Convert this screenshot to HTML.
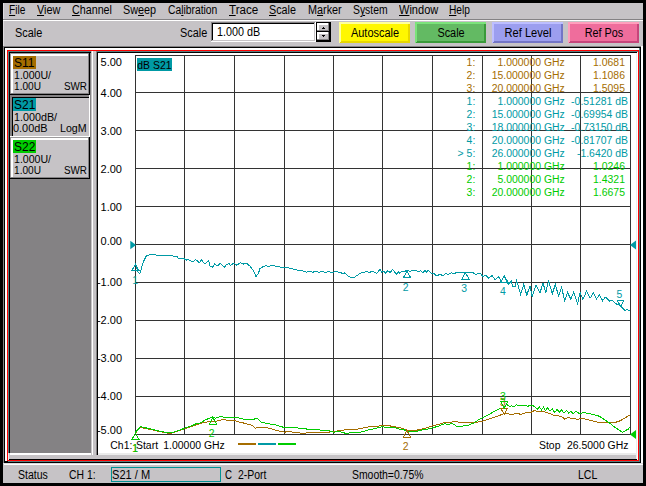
<!DOCTYPE html>
<html><head><meta charset="utf-8"><title>Network Analyzer</title>
<style>
html,body{margin:0;padding:0;background:#000;}
body{width:646px;height:486px;position:relative;overflow:hidden;font-family:"Liberation Sans",sans-serif;}
div,span,svg{position:absolute;}
.grp{left:0;top:0;width:0;height:0;}
span{white-space:nowrap;}
span.t{position:static;}
u{text-decoration:underline;text-underline-offset:1px;text-decoration-thickness:1px;}
svg text{font-family:"Liberation Sans",sans-serif;}
</style></head><body>
<div id="window-frame" class="grp">
<div style="left:3px;top:3px;width:640px;height:480px;background:#c6c3c6;"></div>
<div style="left:3px;top:3px;width:1px;height:43px;background:#dedbde;"></div>
<div style="left:3px;top:19px;width:640px;height:1px;background:#848284;"></div>
<div style="left:3px;top:20px;width:640px;height:1px;background:#fff;"></div>
<div style="left:3px;top:46px;width:639px;height:1px;background:#848284;"></div>
<div style="left:3px;top:46px;width:1px;height:418px;background:#848284;"></div>
<div style="left:4px;top:47px;width:637px;height:416px;background:#000;"></div>
<div style="left:641px;top:46px;width:2px;height:419px;background:#fff;"></div>
<div style="left:3px;top:463px;width:640px;height:1px;background:#dedbde;"></div>
<div style="left:4px;top:464px;width:639px;height:1px;background:#fff;"></div>
<div style="left:5px;top:48px;width:635px;height:414px;background:#fff;"></div>
<div style="left:639px;top:48px;width:1px;height:414px;background:#5a7d7f;"></div>
<div style="left:5px;top:461px;width:635px;height:1px;background:#5a7d7f;"></div>
<div style="left:5px;top:461px;width:3px;height:1px;background:#000;"></div>
<div style="left:7px;top:50px;width:632px;height:411px;background:#ff0000;"></div>
<div style="left:8px;top:51px;width:630px;height:409px;background:#5a7d7f;"></div>
<div style="left:9px;top:52px;width:629px;height:408px;background:#000;"></div>
<div style="left:637px;top:52px;width:1px;height:408px;background:#fff;"></div>
<div style="left:10px;top:53px;width:627px;height:406px;background:#c6c3c6;"></div>
<div style="left:636px;top:53px;width:1px;height:406px;background:#e7efef;"></div>
<div style="left:9px;top:459px;width:628px;height:1px;background:#000;"></div>
<div style="left:8px;top:453px;width:1px;height:7px;background:#e7efef;"></div>
</div>
<div id="trace-panel" class="grp">
<div style="left:10px;top:53px;width:81px;height:400px;background:#848284;"></div>
<div style="left:10px;top:453px;width:82px;height:2px;background:#fff;"></div>
<div style="left:9px;top:453px;width:1px;height:6px;background:#c6c3c6;"></div>
<div style="left:91px;top:51px;width:1px;height:404px;background:#c6c3c6;"></div>
<div style="left:92px;top:51px;width:1px;height:404px;background:#fff;"></div>
<div style="left:93px;top:51px;width:3px;height:404px;background:#c6c3c6;"></div>
<div style="left:96px;top:51px;width:1px;height:404px;background:#848284;"></div>
<div style="left:97px;top:52px;width:1px;height:403px;background:#000;"></div>
<div style="left:98px;top:53px;width:538px;height:400px;background:#fff;"></div>
<div style="left:98px;top:453px;width:538px;height:2px;background:#ebebeb;"></div>
</div>
<div id="trace-buttons" class="grp">
<div style="left:10px;top:53px;width:80px;height:42px;background:#000;"></div>
<div style="left:10px;top:53px;width:79px;height:41px;background:#848284;"></div>
<div style="left:10px;top:53px;width:78px;height:40px;background:#9c9a9c;"></div>
<div style="left:11px;top:54px;width:77px;height:39px;background:#fff;"></div>
<div style="left:13px;top:56px;width:75px;height:37px;background:#c6c3c6;"></div>
<div style="left:10px;top:95px;width:80px;height:42px;background:#fff;"></div>
<div style="left:10px;top:95px;width:79px;height:41px;background:#848284;"></div>
<div style="left:12px;top:97px;width:77px;height:39px;background:#000;"></div>
<div style="left:13px;top:98px;width:76px;height:38px;background:#c6c3c6;"></div>
<div style="left:10px;top:137px;width:80px;height:42px;background:#000;"></div>
<div style="left:10px;top:137px;width:79px;height:41px;background:#848284;"></div>
<div style="left:10px;top:137px;width:78px;height:40px;background:#9c9a9c;"></div>
<div style="left:11px;top:138px;width:77px;height:39px;background:#fff;"></div>
<div style="left:13px;top:140px;width:75px;height:37px;background:#c6c3c6;"></div>
<div style="left:13px;top:56px;width:23px;height:13px;background:#a56d00;"></div>
<span id="lb0" style="left:14px;transform-origin:0 50%;top:57px;font-size:12px;line-height:12px;color:#000;transform:scaleX(1.002)"><span class="t">S11</span></span>
<span id="l10" style="left:14px;transform-origin:0 50%;top:71px;font-size:10px;line-height:10px;color:#000;transform:scaleX(1.058)"><span class="t">1.000U/</span></span>
<span id="l20" style="left:14px;transform-origin:0 50%;top:82px;font-size:10px;line-height:10px;color:#000;transform:scaleX(1.012)"><span class="t">1.00U</span></span>
<span id="fm0" style="left:64px;transform-origin:0 50%;top:82px;font-size:10px;line-height:10px;color:#000;transform:scaleX(0.985)"><span class="t">SWR</span></span>
<div style="left:13px;top:98px;width:23px;height:13px;background:#009aa5;"></div>
<span id="lb1" style="left:14px;transform-origin:0 50%;top:99px;font-size:12px;line-height:12px;color:#000;transform:scaleX(0.997)"><span class="t">S21</span></span>
<span id="l11" style="left:14px;transform-origin:0 50%;top:113px;font-size:10px;line-height:10px;color:#000;transform:scaleX(1.076)"><span class="t">1.000dB/</span></span>
<span id="l21" style="left:13px;transform-origin:0 50%;top:124px;font-size:10px;line-height:10px;color:#000;transform:scaleX(1.091)"><span class="t">0.00dB</span></span>
<span id="fm1" style="left:60px;transform-origin:0 50%;top:124px;font-size:10px;line-height:10px;color:#000;transform:scaleX(1.062)"><span class="t">LogM</span></span>
<div style="left:13px;top:140px;width:23px;height:13px;background:#00cc00;"></div>
<span id="lb2" style="left:14px;transform-origin:0 50%;top:141px;font-size:12px;line-height:12px;color:#000;transform:scaleX(0.997)"><span class="t">S22</span></span>
<span id="l12" style="left:14px;transform-origin:0 50%;top:155px;font-size:10px;line-height:10px;color:#000;transform:scaleX(1.058)"><span class="t">1.000U/</span></span>
<span id="l22" style="left:14px;transform-origin:0 50%;top:166px;font-size:10px;line-height:10px;color:#000;transform:scaleX(1.012)"><span class="t">1.00U</span></span>
<span id="fm2" style="left:64px;transform-origin:0 50%;top:166px;font-size:10px;line-height:10px;color:#000;transform:scaleX(0.985)"><span class="t">SWR</span></span>
</div>
<div id="menubar" class="grp">
<span id="m0" style="left:9px;transform-origin:0 50%;top:4px;font-size:12px;line-height:12px;color:#000;transform:scaleX(0.844)"><span class="t"><u>F</u>ile</span></span>
<span id="m1" style="left:37px;transform-origin:0 50%;top:4px;font-size:12px;line-height:12px;color:#000;transform:scaleX(0.907)"><span class="t"><u>V</u>iew</span></span>
<span id="m2" style="left:72px;transform-origin:0 50%;top:4px;font-size:12px;line-height:12px;color:#000;transform:scaleX(0.894)"><span class="t"><u>C</u>hannel</span></span>
<span id="m3" style="left:123px;transform-origin:0 50%;top:4px;font-size:12px;line-height:12px;color:#000;transform:scaleX(0.901)"><span class="t">Sw<u>e</u>ep</span></span>
<span id="m4" style="left:168px;transform-origin:0 50%;top:4px;font-size:12px;line-height:12px;color:#000;transform:scaleX(0.859)"><span class="t">Ca<u>l</u>ibration</span></span>
<span id="m5" style="left:229px;transform-origin:0 50%;top:4px;font-size:12px;line-height:12px;color:#000;transform:scaleX(0.968)"><span class="t"><u>T</u>race</span></span>
<span id="m6" style="left:269px;transform-origin:0 50%;top:4px;font-size:12px;line-height:12px;color:#000;transform:scaleX(0.896)"><span class="t"><u>S</u>cale</span></span>
<span id="m7" style="left:308px;transform-origin:0 50%;top:4px;font-size:12px;line-height:12px;color:#000;transform:scaleX(0.902)"><span class="t">M<u>a</u>rker</span></span>
<span id="m8" style="left:353px;transform-origin:0 50%;top:4px;font-size:12px;line-height:12px;color:#000;transform:scaleX(0.863)"><span class="t">S<u>y</u>stem</span></span>
<span id="m9" style="left:399px;transform-origin:0 50%;top:4px;font-size:12px;line-height:12px;color:#000;transform:scaleX(0.919)"><span class="t"><u>W</u>indow</span></span>
<span id="m10" style="left:449px;transform-origin:0 50%;top:4px;font-size:12px;line-height:12px;color:#000;transform:scaleX(0.849)"><span class="t"><u>H</u>elp</span></span>
</div>
<div id="toolbar" class="grp">
<span id="tb1" style="left:15px;transform-origin:0 50%;top:27px;font-size:12px;line-height:12px;color:#000;transform:scaleX(0.906)"><span class="t">Scale</span></span>
<span id="tb2" style="left:180px;transform-origin:0 50%;top:27px;font-size:12px;line-height:12px;color:#000;transform:scaleX(0.906)"><span class="t">Scale</span></span>
<div style="left:211px;top:22px;width:105px;height:20px;background:#fff;"></div>
<div style="left:211px;top:22px;width:104px;height:19px;background:#848284;"></div>
<div style="left:212px;top:23px;width:103px;height:18px;background:#c6c3c6;"></div>
<div style="left:212px;top:23px;width:102px;height:17px;background:#000;"></div>
<div style="left:213px;top:24px;width:101px;height:16px;background:#fff;"></div>
<span id="inp" style="left:217px;transform-origin:0 50%;top:26px;font-size:12px;line-height:12px;color:#000;transform:scaleX(0.899)"><span class="t">1.000&nbsp;dB</span></span>
<div style="left:316px;top:22px;width:15px;height:20px;background:#000;"></div>
<div style="left:317px;top:23px;width:12px;height:8px;background:#848284;"></div>
<div style="left:317px;top:23px;width:11px;height:7px;background:#fff;"></div>
<div style="left:319px;top:25px;width:9px;height:5px;background:#c6c3c6;"></div>
<div style="left:317px;top:32px;width:12px;height:8px;background:#848284;"></div>
<div style="left:317px;top:32px;width:11px;height:7px;background:#fff;"></div>
<div style="left:319px;top:34px;width:9px;height:5px;background:#c6c3c6;"></div>
<div style="left:323px;top:27px;width:1px;height:1px;background:#000;"></div>
<div style="left:322px;top:28px;width:3px;height:1px;background:#000;"></div>
<div style="left:322px;top:35px;width:3px;height:1px;background:#000;"></div>
<div style="left:323px;top:36px;width:1px;height:1px;background:#000;"></div>
<div style="left:339px;top:22px;width:71px;height:21px;background:#e7d700;"></div>
<div style="left:339px;top:22px;width:71px;height:2px;background:#ffff9c;"></div>
<div style="left:339px;top:22px;width:2px;height:21px;background:#ffff9c;"></div>
<div style="left:340px;top:42px;width:1px;height:1px;background:#e7d700;"></div>
<div style="left:408px;top:23px;width:1px;height:1px;background:#ffff9c;"></div>
<div style="left:341px;top:24px;width:67px;height:17px;background:#fff700;"></div>
<span id="b1" style="left:274.5px;width:200px;text-align:center;transform-origin:50% 50%;top:27px;font-size:12px;line-height:12px;color:#000;transform:scaleX(0.913)"><span class="t">Autoscale</span></span>
<div style="left:415px;top:22px;width:71px;height:21px;background:#399a39;"></div>
<div style="left:415px;top:22px;width:71px;height:2px;background:#7be37b;"></div>
<div style="left:415px;top:22px;width:2px;height:21px;background:#7be37b;"></div>
<div style="left:416px;top:42px;width:1px;height:1px;background:#399a39;"></div>
<div style="left:484px;top:23px;width:1px;height:1px;background:#7be37b;"></div>
<div style="left:417px;top:24px;width:67px;height:17px;background:#63ba63;"></div>
<span id="b2" style="left:350.5px;width:200px;text-align:center;transform-origin:50% 50%;top:27px;font-size:12px;line-height:12px;color:#000;transform:scaleX(0.906)"><span class="t">Scale</span></span>
<div style="left:492px;top:22px;width:71px;height:21px;background:#7375c6;"></div>
<div style="left:492px;top:22px;width:71px;height:2px;background:#bdbeff;"></div>
<div style="left:492px;top:22px;width:2px;height:21px;background:#bdbeff;"></div>
<div style="left:493px;top:42px;width:1px;height:1px;background:#7375c6;"></div>
<div style="left:561px;top:23px;width:1px;height:1px;background:#bdbeff;"></div>
<div style="left:494px;top:24px;width:67px;height:17px;background:#9c9eef;"></div>
<span id="b3" style="left:427.5px;width:200px;text-align:center;transform-origin:50% 50%;top:27px;font-size:12px;line-height:12px;color:#000;transform:scaleX(0.925)"><span class="t">Ref&nbsp;Level</span></span>
<div style="left:568px;top:22px;width:71px;height:21px;background:#c6457b;"></div>
<div style="left:568px;top:22px;width:71px;height:2px;background:#ff9ebd;"></div>
<div style="left:568px;top:22px;width:2px;height:21px;background:#ff9ebd;"></div>
<div style="left:569px;top:42px;width:1px;height:1px;background:#c6457b;"></div>
<div style="left:637px;top:23px;width:1px;height:1px;background:#ff9ebd;"></div>
<div style="left:570px;top:24px;width:67px;height:17px;background:#ef6d9c;"></div>
<span id="b4" style="left:503.5px;width:200px;text-align:center;transform-origin:50% 50%;top:27px;font-size:12px;line-height:12px;color:#000;transform:scaleX(0.900)"><span class="t">Ref&nbsp;Pos</span></span>
</div>
<div id="statusbar" class="grp">
<span id="s1" style="left:18px;transform-origin:0 50%;top:469px;font-size:12px;line-height:12px;color:#000;transform:scaleX(0.878)"><span class="t">Status</span></span>
<span id="s2" style="left:69px;transform-origin:0 50%;top:469px;font-size:12px;line-height:12px;color:#000;transform:scaleX(0.866)"><span class="t">CH&nbsp;1:</span></span>
<div style="left:111px;top:467px;width:110px;height:15px;background:#009294;"></div>
<div style="left:112px;top:468px;width:108px;height:13px;background:#c6c3c6;"></div>
<span id="s3" style="left:112px;transform-origin:0 50%;top:469px;font-size:12px;line-height:12px;color:#000;transform:scaleX(0.922)"><span class="t">S21&nbsp;/&nbsp;M</span></span>
<span id="s4" style="left:225px;transform-origin:0 50%;top:469px;font-size:12px;line-height:12px;color:#000;transform:scaleX(0.808)"><span class="t">C</span></span>
<span id="s5" style="left:238px;transform-origin:0 50%;top:469px;font-size:12px;line-height:12px;color:#000;transform:scaleX(0.871)"><span class="t">2-Port</span></span>
<span id="s6" style="left:352px;transform-origin:0 50%;top:469px;font-size:12px;line-height:12px;color:#000;transform:scaleX(0.867)"><span class="t">Smooth=0.75%</span></span>
<span id="s7" style="left:578px;transform-origin:0 50%;top:469px;font-size:12px;line-height:12px;color:#000;transform:scaleX(0.880)"><span class="t">LCL</span></span>
</div>
<div id="plot" class="grp">
<svg style="left:0;top:0" width="646" height="486" viewBox="0 0 646 486">
<g fill="#333333" shape-rendering="crispEdges">
<rect x="135" y="55" width="1" height="380"/>
<rect x="184" y="55" width="1" height="380"/>
<rect x="234" y="55" width="1" height="380"/>
<rect x="284" y="55" width="1" height="380"/>
<rect x="333" y="55" width="1" height="380"/>
<rect x="382" y="55" width="1" height="380"/>
<rect x="432" y="55" width="1" height="380"/>
<rect x="482" y="55" width="1" height="380"/>
<rect x="531" y="55" width="1" height="380"/>
<rect x="580" y="55" width="1" height="380"/>
<rect x="630" y="55" width="1" height="380"/>
<rect x="135" y="55" width="496" height="1"/>
<rect x="135" y="92" width="496" height="1"/>
<rect x="135" y="130" width="496" height="1"/>
<rect x="135" y="168" width="496" height="1"/>
<rect x="135" y="206" width="496" height="1"/>
<rect x="135" y="244" width="496" height="1"/>
<rect x="135" y="282" width="496" height="1"/>
<rect x="135" y="320" width="496" height="1"/>
<rect x="135" y="358" width="496" height="1"/>
<rect x="135" y="396" width="496" height="1"/>
<rect x="135" y="434" width="496" height="1"/>
</g>
<text transform="translate(122,66) scale(1.0,1)" font-size="11" fill="#000" text-anchor="end">5.00</text>
<text transform="translate(122,97) scale(1.0,1)" font-size="11" fill="#000" text-anchor="end">4.00</text>
<text transform="translate(122,135) scale(1.0,1)" font-size="11" fill="#000" text-anchor="end">3.00</text>
<text transform="translate(122,173) scale(1.0,1)" font-size="11" fill="#000" text-anchor="end">2.00</text>
<text transform="translate(122,211) scale(1.0,1)" font-size="11" fill="#000" text-anchor="end">1.00</text>
<text transform="translate(122,245) scale(1.0,1)" font-size="11" fill="#000" text-anchor="end">0.00</text>
<text transform="translate(122,286) scale(1.0,1)" font-size="11" fill="#000" text-anchor="end">-1.00</text>
<text transform="translate(122,324) scale(1.0,1)" font-size="11" fill="#000" text-anchor="end">-2.00</text>
<text transform="translate(122,362) scale(1.0,1)" font-size="11" fill="#000" text-anchor="end">-3.00</text>
<text transform="translate(122,400) scale(1.0,1)" font-size="11" fill="#000" text-anchor="end">-4.00</text>
<text transform="translate(122,434) scale(1.0,1)" font-size="11" fill="#000" text-anchor="end">-5.00</text>
<rect x="137" y="58" width="35" height="13" fill="#009aa5" shape-rendering="crispEdges"/>
<text transform="translate(137.3,69) scale(0.95,1)" font-size="11" fill="#000">dB S21</text>
<text transform="translate(475.3,66) scale(0.95,1)" font-size="11" fill="#a56d00" text-anchor="end">1:</text>
<text transform="translate(564.8,66) scale(0.95,1)" font-size="11" fill="#a56d00" text-anchor="end">1.000000 GHz</text>
<text transform="translate(625,66) scale(0.95,1)" font-size="11" fill="#a56d00" text-anchor="end">1.0681</text>
<text transform="translate(475.3,79) scale(0.95,1)" font-size="11" fill="#a56d00" text-anchor="end">2:</text>
<text transform="translate(564.8,79) scale(0.95,1)" font-size="11" fill="#a56d00" text-anchor="end">15.000000 GHz</text>
<text transform="translate(625,79) scale(0.95,1)" font-size="11" fill="#a56d00" text-anchor="end">1.1086</text>
<text transform="translate(475.3,92) scale(0.95,1)" font-size="11" fill="#a56d00" text-anchor="end">3:</text>
<text transform="translate(564.8,92) scale(0.95,1)" font-size="11" fill="#a56d00" text-anchor="end">20.000000 GHz</text>
<text transform="translate(625,92) scale(0.95,1)" font-size="11" fill="#a56d00" text-anchor="end">1.5095</text>
<text transform="translate(475.3,105) scale(0.95,1)" font-size="11" fill="#009aa5" text-anchor="end">1:</text>
<text transform="translate(564.8,105) scale(0.95,1)" font-size="11" fill="#009aa5" text-anchor="end">1.000000 GHz</text>
<text transform="translate(628,105) scale(0.95,1)" font-size="11" fill="#009aa5" text-anchor="end">-0.51281 dB</text>
<text transform="translate(475.3,118) scale(0.95,1)" font-size="11" fill="#009aa5" text-anchor="end">2:</text>
<text transform="translate(564.8,118) scale(0.95,1)" font-size="11" fill="#009aa5" text-anchor="end">15.000000 GHz</text>
<text transform="translate(628,118) scale(0.95,1)" font-size="11" fill="#009aa5" text-anchor="end">-0.69954 dB</text>
<text transform="translate(475.3,131) scale(0.95,1)" font-size="11" fill="#009aa5" text-anchor="end">3:</text>
<text transform="translate(564.8,131) scale(0.95,1)" font-size="11" fill="#009aa5" text-anchor="end">18.000000 GHz</text>
<text transform="translate(628,131) scale(0.95,1)" font-size="11" fill="#009aa5" text-anchor="end">-0.73150 dB</text>
<text transform="translate(475.3,144) scale(0.95,1)" font-size="11" fill="#009aa5" text-anchor="end">4:</text>
<text transform="translate(564.8,144) scale(0.95,1)" font-size="11" fill="#009aa5" text-anchor="end">20.000000 GHz</text>
<text transform="translate(628,144) scale(0.95,1)" font-size="11" fill="#009aa5" text-anchor="end">-0.81707 dB</text>
<text transform="translate(475.3,157) scale(0.95,1)" font-size="11" fill="#009aa5" text-anchor="end">&gt; 5:</text>
<text transform="translate(564.8,157) scale(0.95,1)" font-size="11" fill="#009aa5" text-anchor="end">26.000000 GHz</text>
<text transform="translate(628,157) scale(0.95,1)" font-size="11" fill="#009aa5" text-anchor="end">-1.6420 dB</text>
<text transform="translate(475.3,170) scale(0.95,1)" font-size="11" fill="#00cc00" text-anchor="end">1:</text>
<text transform="translate(564.8,170) scale(0.95,1)" font-size="11" fill="#00cc00" text-anchor="end">1.000000 GHz</text>
<text transform="translate(625,170) scale(0.95,1)" font-size="11" fill="#00cc00" text-anchor="end">1.0246</text>
<text transform="translate(475.3,183) scale(0.95,1)" font-size="11" fill="#00cc00" text-anchor="end">2:</text>
<text transform="translate(564.8,183) scale(0.95,1)" font-size="11" fill="#00cc00" text-anchor="end">5.000000 GHz</text>
<text transform="translate(625,183) scale(0.95,1)" font-size="11" fill="#00cc00" text-anchor="end">1.4321</text>
<text transform="translate(475.3,196) scale(0.95,1)" font-size="11" fill="#00cc00" text-anchor="end">3:</text>
<text transform="translate(564.8,196) scale(0.95,1)" font-size="11" fill="#00cc00" text-anchor="end">20.000000 GHz</text>
<text transform="translate(625,196) scale(0.95,1)" font-size="11" fill="#00cc00" text-anchor="end">1.6675</text>
<polyline points="135.5,432.9 140.5,427.5 144.3,428.2 167.6,433.2 171.4,433.2 184.6,428.8 193.1,426.0 202.4,422.9 211.7,421.0 215.0,422.1 218.1,420.5 222.7,419.8 233.6,420.5 239.8,422.1 246.0,423.6 252.2,425.5 255.2,428.3 259.9,427.2 266.1,427.5 272.3,429.1 280.0,431.4 284.7,432.2 287.8,431.4 295.5,432.6 301.7,433.2 307.9,432.9 311.2,432.9 317.4,432.2 328.2,432.2 333.6,431.4 340.6,430.6 348.3,429.4 357.6,429.1 363.8,427.8 370.0,426.7 376.2,426.4 382.4,425.5 388.6,425.7 394.8,426.7 399.6,427.6 404.3,429.1 407.4,430.4 413.6,430.7 419.8,429.6 426.0,427.9 432.2,426.0 438.3,424.5 444.5,422.6 450.7,422.2 455.4,421.4 460.0,422.6 464.7,422.2 470.9,422.9 475.5,422.5 481.7,421.4 487.9,419.4 492.5,417.8 494.3,417.2 498.9,415.7 502.0,414.4 504.3,413.6 506.7,413.6 511.3,414.4 517.5,413.6 521.4,414.4 525.2,412.9 531.4,412.1 534.5,410.5 538.4,411.6 542.3,411.0 546.1,412.6 550.0,413.6 553.1,415.2 557.8,415.7 561.6,416.4 564.7,419.1 568.6,417.5 571.7,418.7 574.0,418.0 577.1,419.8 581.0,418.0 588.0,419.6 594.6,421.6 601.2,422.9 607.8,422.9 614.4,422.6 619.3,421.2 624.3,418.4 627.5,416.3 630.0,415.0" fill="none" stroke="#a56d00" stroke-width="1" shape-rendering="crispEdges"/>
<polyline points="135.5,432.2 140.5,426.7 144.3,427.5 167.6,432.9 171.4,432.9 184.6,428.3 193.1,425.2 196.2,423.6 199.3,423.6 205.5,419.8 209.4,418.2 212.5,416.7 215.0,418.2 218.1,417.4 221.2,416.2 224.3,417.4 238.2,417.8 242.9,419.0 247.5,419.8 249.8,419.0 252.2,419.8 256.8,418.2 261.4,422.1 266.1,423.3 272.3,424.4 276.9,425.2 283.1,427.2 289.3,427.8 295.5,427.5 301.7,428.7 307.9,429.1 311.2,429.4 317.4,429.4 323.6,430.9 329.8,430.9 333.6,432.2 339.1,431.4 345.2,433.2 351.4,432.9 357.6,432.9 363.8,431.4 368.5,429.8 373.1,429.1 377.8,427.8 382.4,426.7 387.0,427.5 393.2,427.5 397.9,428.3 399.6,429.4 404.3,429.9 407.4,431.4 412.0,431.4 416.7,431.4 422.9,429.9 429.1,428.8 433.7,427.6 439.9,425.6 444.5,423.7 448.4,424.5 452.3,423.4 456.9,426.5 463.1,426.0 469.3,424.9 474.0,422.9 478.6,419.8 483.2,417.5 487.9,415.2 491.7,412.9 494.3,411.3 498.9,409.0 503.6,407.9 506.8,404.1 508.5,405.8 510.1,406.3 511.7,405.5 513.3,406.8 515.0,406.3 516.6,404.5 518.2,406.0 520.4,405.5 522.0,406.0 523.6,405.5 526.3,405.8 528.0,406.3 529.6,405.5 532.8,405.5 534.5,406.8 537.6,409.0 539.2,406.7 541.5,409.8 543.5,407.1 545.4,410.5 547.7,407.9 550.0,411.3 552.3,409.0 554.7,412.6 557.0,409.5 559.3,412.1 561.6,409.8 563.9,412.9 566.3,410.5 568.6,412.9 570.9,411.3 573.2,413.6 576.3,411.3 579.4,413.6 582.5,412.9 586.4,413.0 592.9,414.3 599.5,416.3 604.5,419.6 609.4,422.9 614.4,427.0 619.3,430.3 622.6,432.4 625.9,430.3 628.4,429.2 630.0,427.0" fill="none" stroke="#00cc00" stroke-width="1" shape-rendering="crispEdges"/>
<polyline points="135.5,264.0 136.5,268.0 138.0,272.0 139.7,273.7 141.0,270.0 142.0,266.0 143.6,261.3 145.9,256.7 147.4,255.1 152.9,254.7 155.2,254.3 156.0,255.1 170.7,255.1 171.4,255.9 176.9,256.4 178.4,258.2 183.8,258.5 186.1,260.1 188.5,259.5 190.8,261.0 193.1,262.1 195.4,259.5 197.8,261.3 199.3,262.6 201.6,259.8 203.9,262.9 205.5,263.6 208.6,260.5 210.1,266.0 212.5,267.5 214.8,263.6 217.3,266.0 220.4,263.3 224.3,267.5 226.6,264.4 228.9,263.6 230.5,265.2 233.6,263.3 236.7,265.2 240.5,262.6 243.6,264.1 246.7,263.3 249.8,266.0 252.9,269.8 256.0,276.5 258.3,273.7 259.9,268.7 263.0,266.7 266.1,265.7 268.4,266.4 273.0,265.5 276.9,266.4 281.6,267.2 284.7,267.5 290.9,268.3 295.5,269.8 301.7,270.6 306.3,272.2 309.6,271.4 312.7,272.2 315.8,271.5 318.9,272.2 322.0,271.5 325.1,272.3 328.2,271.7 332.1,272.3 336.0,271.8 339.8,272.2 342.2,273.4 344.5,272.9 347.6,275.6 350.7,277.3 354.5,277.3 358.4,274.5 361.5,272.5 364.6,272.2 366.9,271.4 369.2,272.5 372.3,271.4 374.7,272.2 376.5,273.4 380.1,269.4 381.6,272.2 383.9,271.4 385.5,272.9 387.8,270.6 390.1,272.6 392.5,269.4 394.8,272.2 396.6,274.0 398.7,271.8 399.6,272.9 402.0,271.0 404.3,271.6 407.1,270.1 409.7,271.6 412.8,270.1 415.9,270.2 418.2,272.1 420.5,270.5 422.9,272.9 425.2,270.2 426.7,272.6 428.3,270.1 431.4,273.6 433.7,273.2 436.8,276.0 439.9,274.1 443.0,276.0 445.3,273.6 448.4,274.4 451.5,272.9 454.6,273.6 456.1,272.4 470.9,272.4 473.2,272.6 475.5,274.7 478.6,273.2 480.9,274.1 483.2,276.7 485.6,275.2 488.9,278.2 492.0,275.4 495.1,279.8 498.9,276.7 501.3,281.6 504.3,275.9 508.2,284.4 511.3,281.3 512.9,286.7 515.2,286.7 516.7,280.5 520.6,294.5 523.7,284.4 526.8,295.2 529.9,286.0 532.2,296.8 536.1,285.2 540.0,292.9 543.0,282.9 545.8,292.9 548.5,280.5 552.3,293.7 555.4,284.4 558.5,296.0 561.6,287.5 564.7,300.7 567.5,292.2 570.8,299.3 573.6,292.2 577.6,303.4 580.1,292.6 583.0,299.4 586.6,291.0 590.0,298.3 593.3,293.0 596.6,299.0 599.3,294.6 602.6,300.7 605.3,297.0 609.9,301.2 611.9,300.3 617.3,304.7 619.3,303.6 620.6,306.0 625.2,310.5 627.2,309.6 629.9,310.7" fill="none" stroke="#009aa5" stroke-width="1" shape-rendering="crispEdges"/>
<path d="M132.0 439.5L135.5 433L139.0 439.5Z" fill="none" stroke="#a56d00" stroke-width="1" shape-rendering="crispEdges"/>
<text transform="translate(135.2,452) scale(0.95,1)" font-size="11" fill="#a56d00" text-anchor="middle">1</text>
<path d="M403.5 437.0L407 430.5L410.5 437.0Z" fill="none" stroke="#a56d00" stroke-width="1" shape-rendering="crispEdges"/>
<text transform="translate(405.7,449.5) scale(0.95,1)" font-size="11" fill="#a56d00" text-anchor="middle">2</text>
<path d="M500.7 408.0L504.2 414.5L507.7 408.0Z" fill="none" stroke="#a56d00" stroke-width="1" shape-rendering="crispEdges"/>
<text transform="translate(502.9,406.0) scale(0.95,1)" font-size="11" fill="#a56d00" text-anchor="middle">3</text>
<path d="M132.0 439.5L135.5 433L139.0 439.5Z" fill="none" stroke="#00cc00" stroke-width="1" shape-rendering="crispEdges"/>
<text transform="translate(135.2,452) scale(0.95,1)" font-size="11" fill="#00cc00" text-anchor="middle">1</text>
<path d="M209.5 424.0L213 417.5L216.5 424.0Z" fill="none" stroke="#00cc00" stroke-width="1" shape-rendering="crispEdges"/>
<text transform="translate(211.7,437.0) scale(0.95,1)" font-size="11" fill="#00cc00" text-anchor="middle">2</text>
<path d="M500.7 401.8L504.2 408.3L507.7 401.8Z" fill="none" stroke="#00cc00" stroke-width="1" shape-rendering="crispEdges"/>
<text transform="translate(502.9,399.8) scale(0.95,1)" font-size="11" fill="#00cc00" text-anchor="middle">3</text>
<path d="M132.0 270.5L135.5 264L139.0 270.5Z" fill="none" stroke="#009aa5" stroke-width="1" shape-rendering="crispEdges"/>
<text transform="translate(135.2,283.5) scale(0.95,1)" font-size="11" fill="#009aa5" text-anchor="middle">1</text>
<path d="M403.5 277.5L407 271L410.5 277.5Z" fill="none" stroke="#009aa5" stroke-width="1" shape-rendering="crispEdges"/>
<text transform="translate(405.7,290.5) scale(0.95,1)" font-size="11" fill="#009aa5" text-anchor="middle">2</text>
<path d="M461.9 279.0L465.4 272.5L468.9 279.0Z" fill="none" stroke="#009aa5" stroke-width="1" shape-rendering="crispEdges"/>
<text transform="translate(464.09999999999997,292.0) scale(0.95,1)" font-size="11" fill="#009aa5" text-anchor="middle">3</text>
<path d="M500.8 282.0L504.3 275.5L507.8 282.0Z" fill="none" stroke="#009aa5" stroke-width="1" shape-rendering="crispEdges"/>
<text transform="translate(503.0,295.0) scale(0.95,1)" font-size="11" fill="#009aa5" text-anchor="middle">4</text>
<path d="M617.1 300.0L620.6 306.5L624.1 300.0Z" fill="none" stroke="#009aa5" stroke-width="1" shape-rendering="crispEdges"/>
<text transform="translate(619.3000000000001,298.0) scale(0.95,1)" font-size="11" fill="#009aa5" text-anchor="middle">5</text>
<path d="M130.3 240.7L136 245L130.3 249.3Z" fill="#009aa5"/>
<path d="M636 240.5L630 245L636 249.5Z" fill="#009aa5"/>
<path d="M636 430L630 434.5L636 439Z" fill="#00cc00"/>
<text transform="translate(110.3,449) scale(0.95,1)" font-size="11" fill="#000">Ch1:</text>
<text transform="translate(136,449) scale(0.95,1)" font-size="11" fill="#000">Start</text>
<text transform="translate(163.3,449) scale(0.95,1)" font-size="11" fill="#000">1.00000 GHz</text>
<text transform="translate(539,449) scale(0.95,1)" font-size="11" fill="#000">Stop</text>
<text transform="translate(628.5,449) scale(0.95,1)" font-size="11" fill="#000" text-anchor="end">26.5000 GHz</text>
<g shape-rendering="crispEdges"><rect x="238" y="443" width="18" height="2" fill="#a56d00"/><rect x="258" y="443" width="18" height="2" fill="#009aa5"/><rect x="278" y="443" width="18" height="2" fill="#00cc00"/></g>
</svg>
</div>
</body></html>
